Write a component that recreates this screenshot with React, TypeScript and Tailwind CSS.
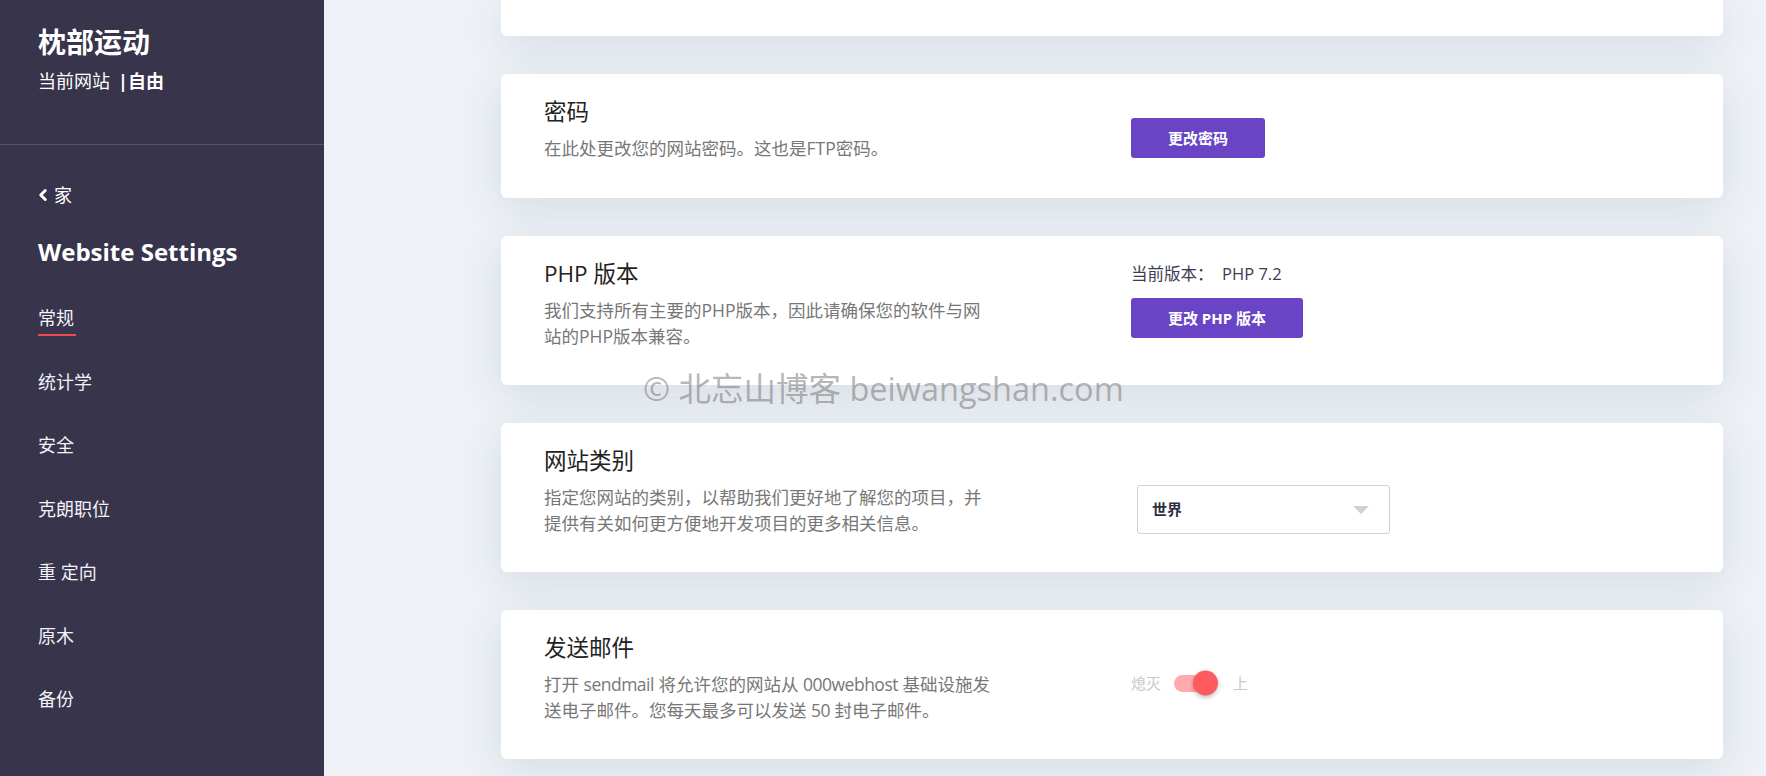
import React from "react";
import { ChevronLeft } from "lucide-react";

const FONT = { fontFamily: '"Open Sans", "Noto Sans CJK SC", sans-serif' };

function Card({
  title,
  lines,
  right,
  pb,
}: {
  title: string;
  lines: React.ReactNode[];
  right: React.ReactNode;
  pb: string;
}) {
  return (
    <div
      className={`flex flex-row rounded-[6px] bg-white pl-[43px] pr-[38px] pt-6 ${pb} shadow-[0_10px_40px_rgba(44,62,110,0.12)]`}
    >
      <div className="w-[587px] shrink-0">
        <div className="text-[22.5px] leading-[28px] text-[#222]">{title}</div>
        <div className="mt-[9px] text-[17.5px] leading-[26px] text-[#777]">
          {lines.map((l, i) => (
            <div key={i} className="whitespace-nowrap">
              {l}
            </div>
          ))}
        </div>
      </div>
      <div className="flex flex-col items-start">{right}</div>
    </div>
  );
}

function L({ children }: { children: React.ReactNode }) {
  return <span className="tracking-[-0.5px]">{children}</span>;
}

export default function App() {
  const nav = ["统计学", "安全", "克朗职位", "重 定向", "原木", "备份"];
  return (
    <div className="relative flex h-screen w-full overflow-hidden" style={FONT}>
      {/* Sidebar */}
      <aside className="flex h-full w-[324px] shrink-0 flex-col bg-[#37344c] text-white">
        <div className="h-[145px] border-b border-[#4a5568] px-[38px] pt-[25px]">
          <div className="text-[28px] font-bold leading-[34px]">枕部运动</div>
          <div className="mt-[10px] flex items-center text-[18px] leading-[24px]">
            <span>当前网站</span>
            <span className="ml-[8px] font-bold">|自由</span>
          </div>
        </div>
        <div className="px-[38px] pt-[38px]">
          <div className="flex items-center text-[18px] leading-[24px]">
            <ChevronLeft size={18} strokeWidth={4} className="-ml-[4px] mr-[2px]" />
            <span>家</span>
          </div>
          <div className="mt-[29px] text-[24px] font-bold leading-[32px]">Website Settings</div>
          <div className="mt-[38px] flex flex-col gap-[39.5px] text-[18px] leading-[24px] text-[#f2f2f7]">
            <div className="relative w-fit">
              常规
              <span className="absolute -bottom-[6px] left-0 h-[2px] w-[38px] bg-[#f04a50]" />
            </div>
            {nav.map((n) => (
              <div key={n} className="whitespace-pre">
                {n}
              </div>
            ))}
          </div>
        </div>
      </aside>

      {/* Main */}
      <main className="flex h-full flex-1 flex-col gap-[38px] bg-[#eef2f6] pl-[177px] pr-[43px]">
        <div className="h-[36px] shrink-0 rounded-b-[6px] bg-white shadow-[0_10px_40px_rgba(44,62,110,0.12)]" />

        <Card
          title="密码"
          lines={["在此处更改您的网站密码。这也是FTP密码。"]}
          pb="pb-[37px]"
          right={
            <button className="mt-[20px] flex h-[40px] w-[134px] items-center justify-center rounded-[3px] bg-[#6944c5] text-[15px] font-bold text-white">
              更改密码
            </button>
          }
        />

        <Card
          title="PHP 版本"
          lines={["我们支持所有主要的PHP版本，因此请确保您的软件与网", "站的PHP版本兼容。"]}
          pb="pb-[36px]"
          right={
            <>
              <div className="whitespace-pre text-[16.5px] leading-[28px] text-[#3a3d50]">
                当前版本：  PHP 7.2
              </div>
              <button className="mt-[10px] flex h-[40px] w-[172px] items-center justify-center rounded-[3px] bg-[#6944c5] text-[15px] font-bold text-white">
                更改 PHP 版本
              </button>
            </>
          }
        />

        <Card
          title="网站类别"
          lines={["指定您网站的类别，以帮助我们更好地了解您的项目，并", "提供有关如何更方便地开发项目的更多相关信息。"]}
          pb="pb-[36px]"
          right={
            <div className="ml-[6px] mt-[38px] flex h-[49px] w-[253px] items-center justify-between rounded-[3px] border border-[#c9d3dd] bg-white pl-[14px] pr-[20px]">
              <span className="text-[15px] font-bold text-[#2d2f45]">世界</span>
              <svg width="16" height="8" viewBox="0 0 16 8">
                <path d="M0 0 L16 0 L8 8 Z" fill="#c9d1db" />
              </svg>
            </div>
          }
        />

        <Card
          title="发送邮件"
          lines={[
            <>
              打开 <L>sendmail</L> 将允许您的网站从 <L>000webhost</L> 基础设施发
            </>,
            <>
              送电子邮件。您每天最多可以发送 <L>50</L> 封电子邮件。
            </>,
          ]}
          pb="pb-[36px]"
          right={
            <div className="mt-[35px] flex h-[28px] items-center text-[15px] text-[#c8c8c8]">
              <span>熄灭</span>
              <div className="relative ml-[13px] h-[17px] w-[39px] rounded-full bg-[#ffaaad]">
                <span className="absolute -right-[5px] top-1/2 h-[25px] w-[25px] -translate-y-1/2 rounded-full bg-[#ff5a5f] shadow-[0_2px_4px_rgba(0,0,0,0.25)]" />
              </div>
              <span className="ml-[20px]">上</span>
            </div>
          }
        />
      </main>

      {/* Watermark overlay */}
      <div className="pointer-events-none absolute left-[643px] top-[371px] whitespace-nowrap text-[32.5px] leading-[36px] text-[rgba(120,120,120,0.55)]">
        © 北忘山博客 beiwangshan.com
      </div>
    </div>
  );
}
